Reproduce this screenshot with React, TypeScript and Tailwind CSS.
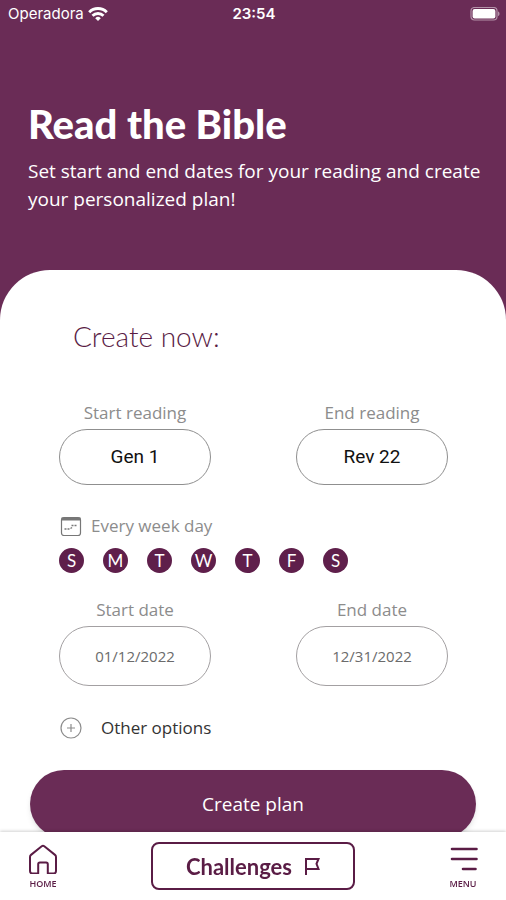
import { useState } from "react";

const DAYS = [
  { letter: "S", name: "Sunday" },
  { letter: "M", name: "Monday" },
  { letter: "T", name: "Tuesday" },
  { letter: "W", name: "Wednesday" },
  { letter: "T", name: "Thursday" },
  { letter: "F", name: "Friday" },
  { letter: "S", name: "Saturday" },
];

const StatusBar = () => (
  <div className="grid grid-cols-3 items-center h-7 pl-2 pr-1.5 text-white font-['Inter',sans-serif]">
    <div className="flex items-center gap-1 text-[15px]">
      <span>Operadora</span>
      <svg viewBox="0 0 20 14" className="w-5 h-3.5" fill="none" stroke="currentColor" strokeWidth="2.9">
        <path d="M1.2 5.2a12.4 12.4 0 0 1 17.6 0" />
        <path d="M4.5 8.8a7.8 7.8 0 0 1 11 0" />
        <path d="M10 14 7.2 11.2a4 4 0 0 1 5.6 0z" fill="currentColor" stroke="none" />
      </svg>
    </div>
    <span className="text-center text-[15px] font-semibold">23:54</span>
    <svg viewBox="0 0 30 14" className="w-[30px] h-3.5 justify-self-end" fill="none">
      <rect x="1" y="0.5" width="26" height="12.5" rx="3.5" stroke="#b391a8" strokeWidth="1.2" />
      <rect x="2.6" y="2" width="22.8" height="9.5" rx="2" fill="#fff" />
      <path d="M28 4.5c2 .6 2 3.9 0 4.5z" fill="#b391a8" />
    </svg>
  </div>
);

const BookField = ({id, label, options}: {id: string, label: string, options: string[]}) => (
  <div className="flex flex-col items-center w-[152px]">
    <label htmlFor={id} className="text-[17px] leading-6 text-[#8c8c8c]">{label}</label>
    <select
      id={id}
      className="mt-1 w-full h-14 appearance-none rounded-full border border-[#8f8f8f] bg-white text-center [text-align-last:center] text-[19px] text-[#111] font-['Roboto',sans-serif]"
    >
      {options.map((option) => <option key={option}>{option}</option>)}
    </select>
  </div>
);

const DateField = ({id, label, value}: {id: string, label: string, value: string}) => (
  <div className="flex flex-col items-center w-[152px]">
    <label htmlFor={id} className="text-[17px] leading-6 text-[#8c8c8c]">{label}</label>
    <input
      id={id}
      type="text"
      defaultValue={value}
      className="mt-1 w-full h-[60px] rounded-full border border-[#a3a0a2] bg-white text-center text-[15px] text-[#6b6b6b]"
    />
  </div>
);

const WeekDays = () => {
  const [selected, setSelected] = useState(DAYS.map(() => true));

  const toggle = (index: number) => {
    setSelected(selected.map((on, i) => (i === index ? !on : on)));
  };

  return (
    <div className="mt-2.5 flex gap-[19px]">
      {DAYS.map((day, i) => (
        <button
          key={day.name}
          type="button"
          aria-label={day.name}
          aria-pressed={selected[i]}
          onClick={() => toggle(i)}
          className={`flex size-[25px] items-center justify-center rounded-full text-[17px] leading-6 font-['Lato',sans-serif] ${selected[i] ? "bg-[#5f1f4b] text-white" : "bg-gray-200 text-[#5f1f4b]"}`}
        >
          {day.letter}
        </button>
      ))}
    </div>
  );
};

const BottomNav = () => (
  <nav className="fixed inset-x-0 bottom-0 flex h-[68px] items-center justify-between bg-white px-7 text-[#5a1c45] shadow-[0_-1px_3px_rgba(0,0,0,0.18)]">
    <a href="#home" className="flex w-[30px] flex-col items-center">
      <svg viewBox="0 0 30 32" className="w-[30px] h-8" fill="none" stroke="currentColor" strokeWidth="2" strokeLinejoin="round">
        <path d="M4.5 31.5h5.7V22.2q0-1.7 1.7-1.7h6.2q1.7 0 1.7 1.7v9.3h5.7q2.5 0 2.5-2.5V15q0-1.3-1-2.1L16.3 4.3q-1.3-1-2.6 0L3 12.9q-1 .8-1 2.1V29q0 2.5 2.5 2.5z" />
      </svg>
      <span className="mt-1 text-[9px] leading-3 font-['Open_Sans',sans-serif] font-semibold">HOME</span>
    </a>
    <button type="button" className="flex h-12 w-[204px] items-center justify-center gap-3 rounded-lg border-2 border-[#5a1c45] font-['Lato',sans-serif] text-[22px] font-bold">
      Challenges
      <svg viewBox="0 0 16 18" className="w-4 h-[18px]" fill="none" stroke="currentColor" strokeWidth="2">
        <path d="M2 18V2H14.5L12.5 6.8 14.5 12H2" />
      </svg>
    </button>
    <a href="#menu" className="flex w-[30px] flex-col items-center">
      <svg viewBox="0 0 30 32" className="w-[30px] h-8" fill="none" stroke="currentColor" strokeWidth="2.6" strokeLinecap="round">
        <path d="M4 7H28.5M4 17H28.5M15 27H27.5" />
      </svg>
      <span className="mt-1 text-[9px] leading-3 font-['Open_Sans',sans-serif] font-semibold">MENU</span>
    </a>
  </nav>
);

export default function App() {
  return (
    <div className="min-h-screen bg-white font-['Open_Sans',sans-serif]">
      <div className="bg-[#6a2c56]">
        <StatusBar />
        <header className="pt-[76px] pb-[57px] pl-7 pr-2 text-white">
          <h1 className="text-[40px] leading-10 font-black font-['Lato',sans-serif]">Read the Bible</h1>
          <p className="mt-[13px] text-[19px] leading-7">
            Set start and end dates for your reading and create your personalized plan!
          </p>
        </header>
        <main className="rounded-t-[50px] bg-white pt-[50px] pb-14">
          <form>
            <div className="pl-[59px] pr-[58px]">
              <h2 className="pl-3.5 text-[28px] leading-8 font-light text-[#5a1c45] font-['Lato',sans-serif]">Create now:</h2>
              <div className="mt-[49px] flex justify-between">
                <BookField id="start-reading" label="Start reading" options={["Gen 1", "Exo 1", "Lev 1"]} />
                <BookField id="end-reading" label="End reading" options={["Rev 22", "Rev 21", "Rev 20"]} />
              </div>
              <div className="mt-[29px] flex items-center gap-2 text-[17px] leading-6 text-[#8c8c8c]">
                <svg viewBox="0 0 24 22" className="w-6 h-[22px]" fill="none" stroke="#777">
                  <rect x="2.5" y="2.5" width="19" height="18" rx="2.5" strokeWidth="1.2" />
                  <path d="M2.5 4H21.5" strokeWidth="3" />
                  <path d="M5.5 14h2M8.5 14h2M11.5 13.5l1.5-1M12.5 10.5h2M15.5 10.5h2" strokeWidth="1.5" />
                </svg>
                <span>Every week day</span>
              </div>
              <WeekDays />
              <div className="mt-[25px] flex justify-between">
                <DateField id="start-date" label="Start date" value="01/12/2022" />
                <DateField id="end-date" label="End date" value="12/31/2022" />
              </div>
              <button type="button" className="mt-[30px] flex items-center gap-[18px] text-[17px] leading-6 text-[#333]">
                <svg viewBox="0 0 24 24" className="size-6" fill="none" stroke="#8c8c8c" strokeWidth="1.2">
                  <circle cx="12" cy="12" r="10" />
                  <path d="M12 8v8M8 12h8" />
                </svg>
                Other options
              </button>
            </div>
            <div className="mt-[30px] px-[30px]">
              <button type="button" className="h-[68px] w-full rounded-full bg-[#6a2c56] text-[19px] text-white shadow-md">
                Create plan
              </button>
            </div>
          </form>
        </main>
      </div>
      <BottomNav />
    </div>
  );
}
